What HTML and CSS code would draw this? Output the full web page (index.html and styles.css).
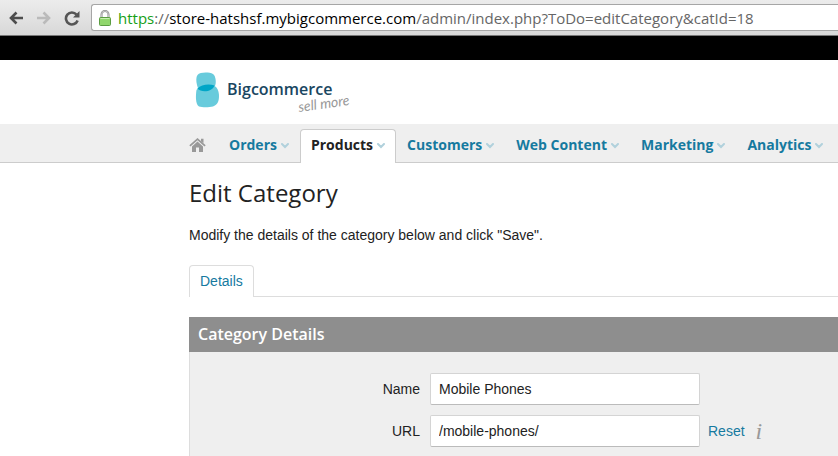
FILE: index.html
```
<!DOCTYPE html>
<html lang="en">

<head>
    <meta charset="UTF-8">
    <meta name="viewport" content="width=device-width, initial-scale=1.0">
    <title>Edit Category</title>
    <link rel="stylesheet" href="styles.css">
</head>

<body>
    <svg width="0" height="0" class="sprite" aria-hidden="true">
        <symbol id="chevron" viewBox="0 0 8 6">
            <path d="M1 1l3 3 3-3" fill="none" stroke="#b1d1dc" stroke-width="2" stroke-linecap="round"/>
        </symbol>
    </svg>

    <div class="toolbar">
        <button class="tool" type="button" aria-label="Back">
            <svg width="16" height="16" viewBox="0 0 16 16" fill="none" stroke="#4d4d4d" stroke-width="2.600"><path d="M15 8H3M8.500 2.500L3 8l5.500 5.500"/></svg>
        </button>
        <button class="tool" type="button" aria-label="Forward" disabled>
            <svg width="16" height="16" viewBox="0 0 16 16" fill="none" stroke="#bababa" stroke-width="2.600"><path d="M1 8h12M7.500 2.500L13 8l-5.500 5.500"/></svg>
        </button>
        <button class="tool" type="button" aria-label="Reload">
            <svg width="16" height="16" viewBox="0 0 16 16"><path d="M12.500 4.500A6 6 0 1 0 13.600 10.500" fill="none" stroke="#555" stroke-width="2.600"/><path d="M15.500 1v6.500H9z" fill="#555"/></svg>
        </button>
        <div class="address">
            <svg width="12" height="16" viewBox="0 0 12 16">
                <path d="M2.500 8V4.500a3.500 3.500 0 0 1 7 0V8" fill="none" stroke="#8b8b8b" stroke-width="2"/>
                <path d="M2.500 8V4.500a3.500 3.500 0 0 1 7 0V8" fill="none" stroke="#ddd" stroke-width=".7"/>
                <rect x=".5" y="7.500" width="11" height="8" rx="1" fill="#90d66c" stroke="#5b9c42"/>
                <path d="M1.500 8.500h9" stroke="#c7f0b0"/>
            </svg>
            <div class="url" role="textbox" contenteditable="true" spellcheck="false" aria-label="Address"><span class="scheme">https</span>://<span class="host">store-hatshsf.mybigcommerce.com</span>/admin/index.php?ToDo=editCategory&amp;catId=18</div>
        </div>
    </div>
    <div class="top-strip"></div>

    <header class="header">
        <a class="logo" href="#" aria-label="Bigcommerce, sell more">
            <svg width="166" height="44" viewBox="0 0 166 44">
                <path d="M8 13C7 9 7 5 8.500 3 11 0 20 0 24 2c3 2 3.500 9 2 12-2 4-7 5.500-11 5.500-4 0-6-2-7-6.500z" fill="#68cbdc"/>
                <path d="M7.500 18C10 13 19 11.500 24 13c4 1.500 6 6 6 11 0 6-2 9-6 10.500-4 1-11 1-14 0-3.500-2-3.500-10.500-2.500-16.500z" fill="#68cbdc"/>
                <path d="M8.500 16.500C12 12.500 20 11.500 25.500 13.500 23.500 20 12 21 8.500 16.500z" fill="#00a6c7"/>
                <text class="logo-name" x="38" y="23">Bigcommerce</text>
                <text class="logo-slogan" x="110" y="40" transform="rotate(-8 110 40)">sell more</text>
            </svg>
        </a>
    </header>

    <nav class="nav">
        <a class="home" href="#" aria-label="Home">
            <svg width="17" height="14" viewBox="0 0 17 14" fill="#999"><path d="M8.500 0l8.200 7.200-1.200 1.300-7-6.200-7 6.200L.3 7.200 8.500 0zM12 .8h2.500V5L12 2.900zM8.500 3.600l5.500 5V14h-4V9.500H7V14H3V8.600z"/></svg>
        </a>
        <a class="nav-item" href="#">Orders <svg class="chevron"><use href="#chevron"/></svg></a>
        <a class="nav-item active" href="#">Products <svg class="chevron"><use href="#chevron"/></svg></a>
        <a class="nav-item" href="#">Customers <svg class="chevron"><use href="#chevron"/></svg></a>
        <a class="nav-item" href="#">Web Content <svg class="chevron"><use href="#chevron"/></svg></a>
        <a class="nav-item" href="#">Marketing <svg class="chevron"><use href="#chevron"/></svg></a>
        <a class="nav-item" href="#">Analytics <svg class="chevron"><use href="#chevron"/></svg></a>
    </nav>

    <main class="content">
        <h1>Edit Category</h1>
        <p>Modify the details of the category below and click "Save".</p>
        <div class="tabs">
            <a class="tab" href="#details">Details</a>
        </div>
        <section class="panel" id="details">
            <h2>Category Details</h2>
            <form class="fields">
                <div class="row">
                    <label for="name">Name</label>
                    <input type="text" id="name" value="Mobile Phones">
                </div>
                <div class="row">
                    <label for="url">URL</label>
                    <input type="text" id="url" value="/mobile-phones/">
                    <a href="#">Reset</a>
                    <span class="info">i</span>
                </div>
            </form>
        </section>
    </main>
</body>

</html>
```
FILE: styles.css
```
* {
    box-sizing: border-box;
}

body {
    font-family: "Liberation Sans", Arial, sans-serif;
    font-size: 14px;
    line-height: 20px;
    background-color: white;
    color: #222;
    margin: 0;
    overflow-x: hidden;
}

a {
    color: #167a9f;
    text-decoration: none;
}

svg {
    display: block;
    flex: none;
}

.sprite {
    position: absolute;
}

/* browser bar */
.toolbar {
    display: flex;
    align-items: center;
    height: 36px;
    padding-left: 8px;
    gap: 12px;
    background: linear-gradient(#ececec, #d8d8d8);
    border-bottom: 1px solid #777;
}

.tool {
    width: 16px;
    padding: 0;
    border: none;
    background: none;
}

.address {
    flex: 1;
    display: flex;
    align-items: center;
    gap: 7px;
    height: 27px;
    margin-left: -1px;
    padding-left: 7px;
    background-color: white;
    border: 1px solid #a6a6a6;
    border-right: none;
    border-radius: 3px 0 0 3px;
}

.url {
    font-family: "Open Sans", sans-serif;
    font-size: 15px;
    color: #666;
    white-space: nowrap;
    outline: none;
}

.scheme {
    color: #16a016;
}

.host {
    color: black;
}

.top-strip {
    height: 24px;
    background-color: black;
}

.header {
    height: 64px;
    padding: 12px 0 0 189px;
}

.logo {
    display: inline-block;
}

.logo-name {
    font: 600 16px "Open Sans", sans-serif;
    fill: #194661;
}

.logo-slogan {
    font: italic 14px Lato, sans-serif;
    fill: #999;
}

/* main navigation */
.nav {
    display: flex;
    align-items: flex-start;
    height: 39px;
    padding: 5px 0 0 189px;
    background-color: #efefef;
    border-bottom: 1px solid #ccc;
}

.home {
    padding-top: 9px;
    margin-right: 12px;
}

.nav-item {
    display: flex;
    align-items: center;
    gap: 4px;
    height: 34px;
    padding: 0 10px 4px;
    border: 1px solid transparent;
    border-bottom: none;
    border-radius: 4px 4px 0 0;
    font-family: "Open Sans", sans-serif;
    font-size: 14px;
    font-weight: bold;
    white-space: nowrap;
}

.nav-item.active {
    background-color: white;
    border-color: #ccc;
    color: #222;
}

.chevron {
    width: 8px;
    height: 6px;
    margin-top: 3px;
}

/* page */
.content {
    padding-left: 189px;
}

h1 {
    margin: 14px 0 16px;
    font: 24px/32px "Open Sans", sans-serif;
}

p {
    margin: 0 0 20px;
}

.tabs {
    display: flex;
    border-bottom: 1px solid #ddd;
}

.tab {
    margin-bottom: -1px;
    padding: 5px 10px 6px;
    background-color: white;
    border: 1px solid #ddd;
    border-bottom: none;
    border-radius: 4px 4px 0 0;
}

.panel {
    margin-top: 20px;
    background-color: #efefef;
    border-left: 1px solid #ddd;
}

h2 {
    margin: 0 0 0 -1px;
    padding: 0 9px;
    background-color: #8e8e8e;
    color: white;
    font: 600 16px/35px "Open Sans", sans-serif;
}

.fields {
    display: grid;
    gap: 10px;
    padding: 21px 0 20px;
}

.row {
    display: flex;
    align-items: center;
}

.row label {
    width: 230px;
    margin-right: 10px;
    text-align: right;
}

.row input {
    width: 270px;
    height: 32px;
    margin-right: 8px;
    padding: 0 8px;
    border: 1px solid #d4d4d4;
    border-bottom-color: #bbb;
    border-radius: 2px;
    font: inherit;
    color: inherit;
}

.info {
    margin-left: 11px;
    font: italic 24px/24px "Liberation Serif", serif;
    color: #999;
}
```
